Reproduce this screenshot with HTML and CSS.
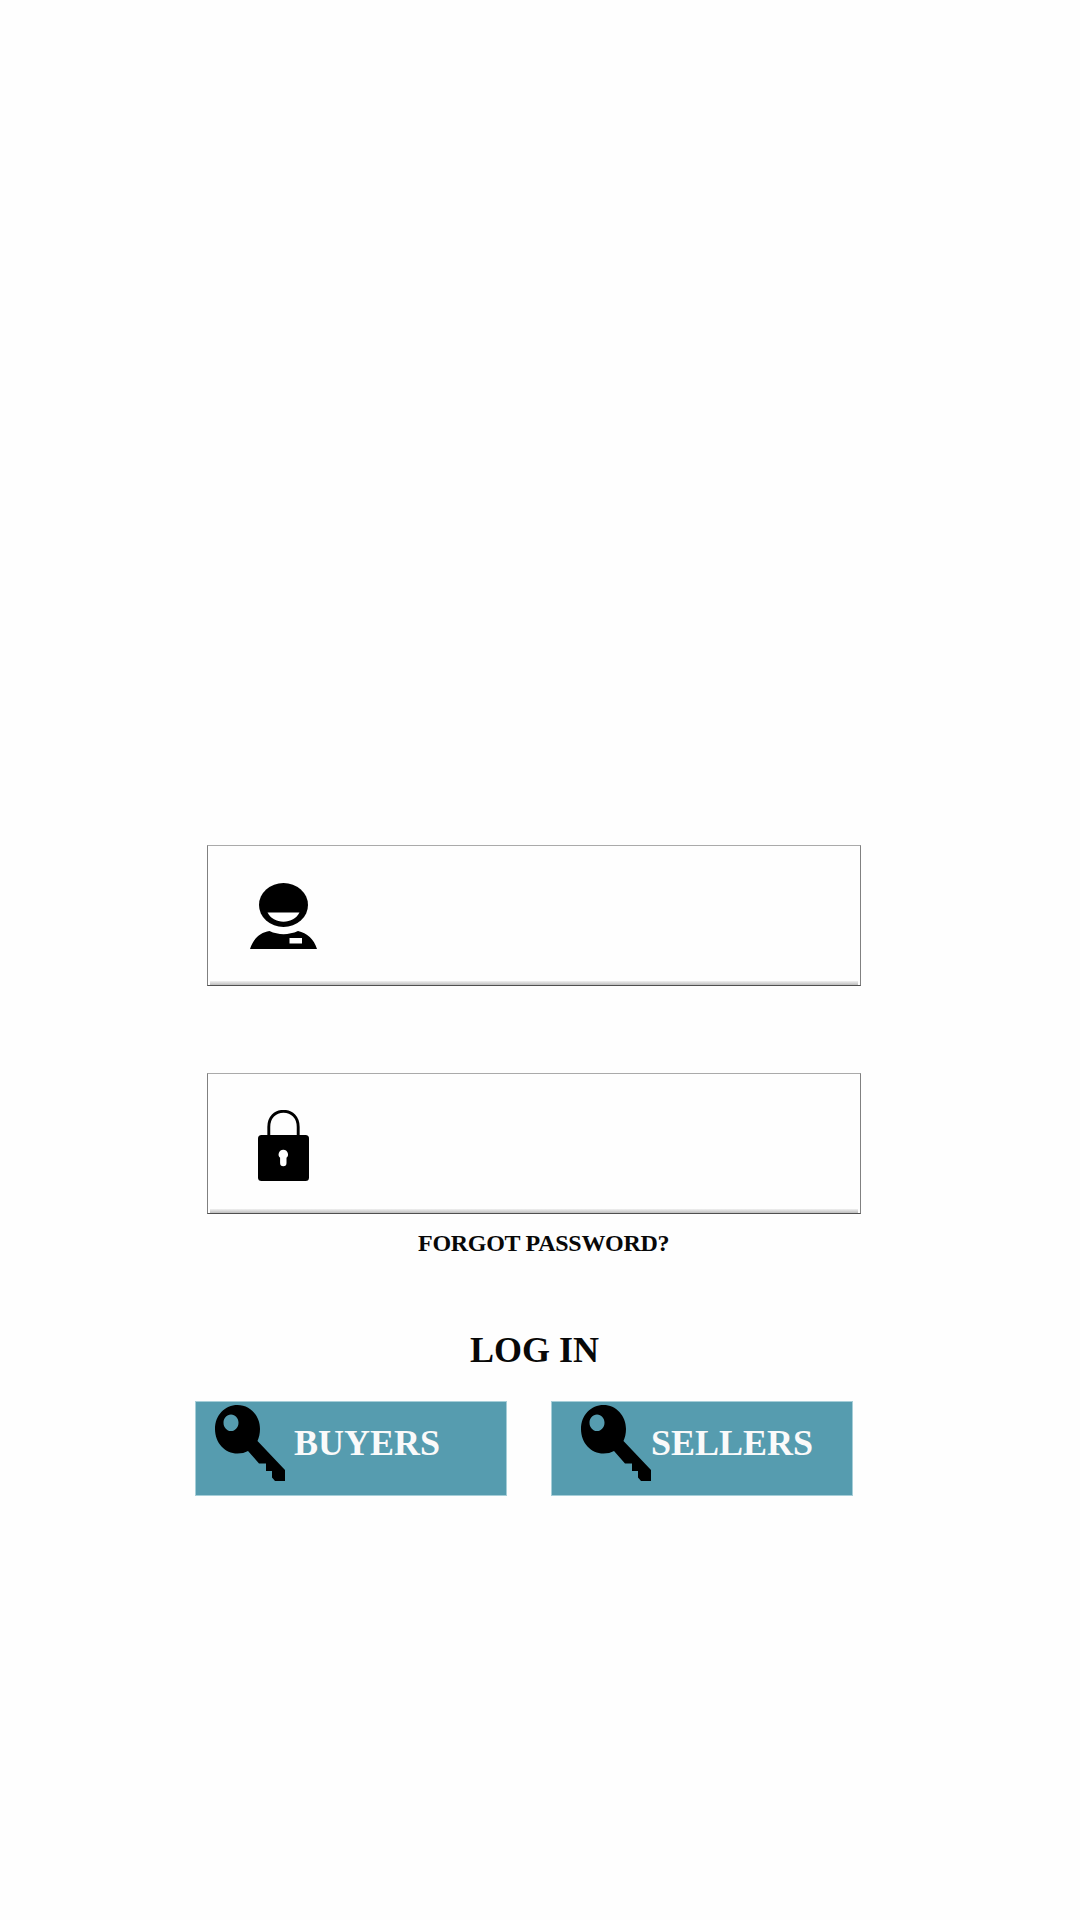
FILE: index.html
```html
<!DOCTYPE html>
<html lang="en">
<head>
<meta charset="utf-8">
<title>Log in</title>
<link rel="stylesheet" href="styles.css">
</head>
<body>
<main class="login">
  <div class="field">
    <svg class="user" viewBox="0 0 67 66" aria-hidden="true">
      <ellipse cx="33.5" cy="22" rx="24.5" ry="22"/>
      <path fill="#fff" d="M17.5 29.500h32c-3 6-9 9.200-16 9.200s-13-3.200-16-9.200z"/>
      <path d="M0 66C3 56 10 49.500 19.500 48c9 4.200 19 4.200 28.500 0C57 50 64 56 67 66z"/>
      <path fill="#fff" d="M39.500 55h12.500v5.500H39.500z"/>
    </svg>
  </div>
  <div class="field">
    <svg class="lock" viewBox="0 0 51 71" aria-hidden="true">
      <path fill="none" stroke="#000" stroke-width="2.900" d="M10.800 26V17C10.800 7.500 17 1.300 25.500 1.300S40.200 7.500 40.200 17v9"/>
      <rect y="25" width="51" height="46" rx="3.500"/>
      <path fill="#fff" d="M25.300 39.800a4.600 4.600 0 0 1 3.200 8V53a3.200 3.200 0 0 1-6.400 0v-5.200a4.600 4.600 0 0 1 3.200-8z"/>
    </svg>
  </div>
  <a class="forgot">FORGOT PASSWORD?</a>
  <h1 class="title">LOG IN</h1>
  <div class="actions">
    <button class="btn buyers">
      <svg class="key" viewBox="0 0 70 76" aria-hidden="true"><path fill-rule="evenodd" d="M22.500 0C35 0 45 10.500 45 24c0 4.500-1 8.500-2.500 12L70 65v11H60l-3-3.500V66h-6v-7.500h-7L33 46c-3 1.700-6.500 2.500-10.500 2.500C10 48.500 0 38 0 24S10 0 22.500 0zM16 9.500c-4.300 0-7.500 3.700-7.500 8.200s3.200 8.300 7.500 8.300 7.500-3.800 7.500-8.300S20.300 9.500 16 9.500z"/></svg>
      <span>BUYERS</span>
    </button>
    <button class="btn sellers">
      <svg class="key" viewBox="0 0 70 76" aria-hidden="true"><path fill-rule="evenodd" d="M22.500 0C35 0 45 10.500 45 24c0 4.500-1 8.500-2.500 12L70 65v11H60l-3-3.500V66h-6v-7.500h-7L33 46c-3 1.700-6.500 2.500-10.500 2.500C10 48.500 0 38 0 24S10 0 22.500 0zM16 9.500c-4.300 0-7.500 3.700-7.500 8.200s3.200 8.300 7.500 8.300 7.500-3.800 7.500-8.300S20.300 9.500 16 9.500z"/></svg>
      <span>SELLERS</span>
    </button>
  </div>
</main>
</body>
</html>
```
FILE: styles.css
```css
* { box-sizing: border-box; }
body {
  margin: 0;
  background: #fefefe;
  color: #080808;
  font-family: "Liberation Serif", "Times New Roman", serif;
  font-weight: bold;
}
.login {
  display: flex;
  flex-direction: column;
  align-items: flex-start;
  min-height: 1920px;
  padding: 845px 0 0 195px;
}
.field {
  width: 654px;
  height: 141px;
  margin: 0 0 87px 12px;
  padding: 37px 0 0 42px;
  border: 1px solid #808080;
  border-top-color: #aaa;
  border-bottom-color: #505050;
  background: linear-gradient(#f0f0f0, #bdbdbd) center bottom / 648px 4px no-repeat #fefefe;
}
.field + .field {
  padding: 36px 0 0 50px;
  margin-bottom: 15px;
}
.user { display: block; width: 67px; height: 66px; }
.lock { display: block; width: 51px; height: 71px; }
.forgot {
  margin-left: 223px;
  font-size: 24px;
  line-height: 28px;
  letter-spacing: -0.28px;
  white-space: nowrap;
}
.title {
  margin: 73px 0 31px 275px;
  font-size: 36px;
  line-height: 40px;
}
.actions { display: flex; gap: 44px; }
.btn {
  display: flex;
  align-items: flex-start;
  height: 95px;
  padding: 3px 0 0;
  border: 1px solid #a6ced8;
  border-radius: 0;
  background: #569caf;
  color: #fafafa;
  font: bold 36px/40px "Liberation Serif", "Times New Roman", serif;
}
.buyers { width: 312px; padding-left: 19px; gap: 9px; }
.sellers { width: 302px; padding-left: 29px; gap: 0; }
.key { width: 70px; height: 76px; flex: none; }
.btn span { margin-top: 18px; }
```
